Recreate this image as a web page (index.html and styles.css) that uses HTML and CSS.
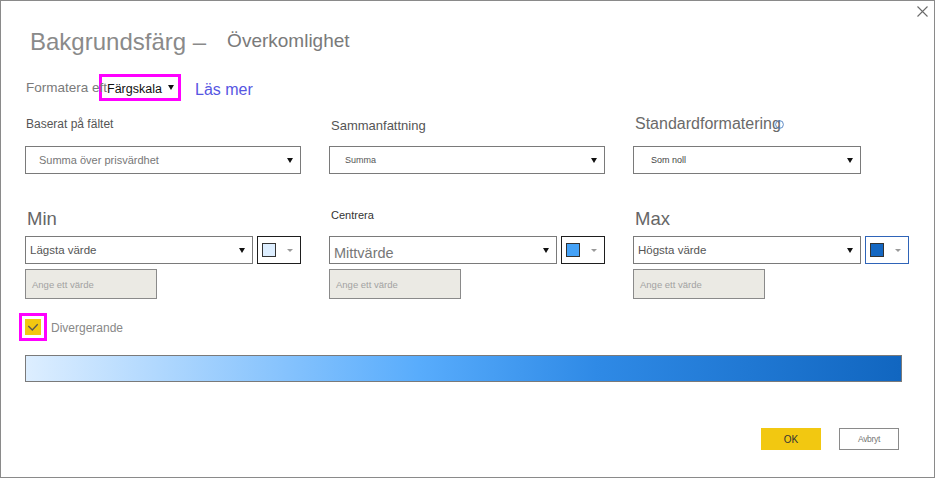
FILE: index.html
```html
<!DOCTYPE html>
<html lang="sv">
<head>
<meta charset="utf-8">
<title>Bakgrundsfärg – Överkomlighet</title>
<link rel="stylesheet" href="styles.css">
</head>
<body>
<div class="dialog">
  <div class="topbar">
    <svg class="close" width="11" height="11" viewBox="0 0 11 11"><path d="M0.5 0.5 L10.5 10.5 M10.5 0.5 L0.5 10.5" stroke="#6a6a6a" stroke-width="1.1" fill="none"/></svg>
  </div>

  <div class="title-row">
    <h1 class="title">Bakgrundsfärg –</h1>
    <span class="subtitle">Överkomlighet</span>
  </div>

  <div class="format-row">
    <span class="format-label">Formatera efter</span>
    <div class="format-select">
      <span class="format-value">Färgskala</span>
      <svg class="format-caret" width="6" height="5" viewBox="0 0 6 5"><polygon points="0,0 6,0 3,5" fill="#111"/></svg>
    </div>
    <a class="learn">Läs mer</a>
  </div>

  <div class="fields">
    <div class="field">
      <div class="field-head"><span class="lbl lbl-base">Baserat på fältet</span></div>
      <div class="select">
        <span class="sel-text sel-field">Summa över prisvärdhet</span>
        <svg class="caret" width="6" height="5" viewBox="0 0 6 5"><polygon points="0,0 6,0 3,5" fill="#111"/></svg>
      </div>
    </div>
    <div class="field">
      <div class="field-head"><span class="lbl lbl-sum">Sammanfattning</span></div>
      <div class="select">
        <span class="sel-text sel-small">Summa</span>
        <svg class="caret" width="6" height="5" viewBox="0 0 6 5"><polygon points="0,0 6,0 3,5" fill="#111"/></svg>
      </div>
    </div>
    <div class="field">
      <div class="field-head"><span class="lbl lbl-std">Standardformatering</span><svg class="info" width="9" height="9" viewBox="0 0 9 9"><circle cx="4.5" cy="4.5" r="3.9" stroke="#4f7fc0" stroke-width="0.9" fill="none"/></svg></div>
      <div class="select select-narrow">
        <span class="sel-text sel-small sel-dark">Som noll</span>
        <svg class="caret" width="6" height="5" viewBox="0 0 6 5"><polygon points="0,0 6,0 3,5" fill="#111"/></svg>
      </div>
    </div>
  </div>

  <div class="stops">
    <div class="stop">
      <div class="stop-head stop-head-big"><span class="stop-lbl">Min</span></div>
      <div class="stop-controls">
        <div class="select select-stop">
          <span class="sel-text sel-stop">Lägsta värde</span>
          <svg class="caret" width="6" height="5" viewBox="0 0 6 5"><polygon points="0,0 6,0 3,5" fill="#111"/></svg>
        </div>
        <div class="picker">
          <span class="swatch swatch-min"></span>
          <svg class="picker-caret" width="6" height="3" viewBox="0 0 6 3"><polygon points="0,0 6,0 3,3" fill="#9a9a9a"/></svg>
        </div>
      </div>
      <div class="value-input">Ange ett värde</div>
    </div>
    <div class="stop">
      <div class="stop-head stop-head-small"><span class="stop-lbl-small">Centrera</span></div>
      <div class="stop-controls">
        <div class="select select-stop">
          <span class="sel-text sel-mid">Mittvärde</span>
          <svg class="caret" width="6" height="5" viewBox="0 0 6 5"><polygon points="0,0 6,0 3,5" fill="#111"/></svg>
        </div>
        <div class="picker">
          <span class="swatch swatch-mid"></span>
          <svg class="picker-caret" width="6" height="3" viewBox="0 0 6 3"><polygon points="0,0 6,0 3,3" fill="#9a9a9a"/></svg>
        </div>
      </div>
      <div class="value-input">Ange ett värde</div>
    </div>
    <div class="stop">
      <div class="stop-head stop-head-big"><span class="stop-lbl">Max</span></div>
      <div class="stop-controls">
        <div class="select select-stop">
          <span class="sel-text sel-stop">Högsta värde</span>
          <svg class="caret" width="6" height="5" viewBox="0 0 6 5"><polygon points="0,0 6,0 3,5" fill="#111"/></svg>
        </div>
        <div class="picker picker-focus">
          <span class="swatch swatch-max"></span>
          <svg class="picker-caret" width="6" height="3" viewBox="0 0 6 3"><polygon points="0,0 6,0 3,3" fill="#9a9a9a"/></svg>
        </div>
      </div>
      <div class="value-input">Ange ett värde</div>
    </div>
  </div>

  <div class="diverge-row">
    <span class="highlight-box">
      <span class="checkbox">
        <svg width="16" height="16" viewBox="0 0 16 16"><path d="M3.3 7 L7.3 11 L12.7 5.3" stroke="#555" stroke-width="1.3" fill="none"/></svg>
      </span>
    </span>
    <span class="diverge-label">Divergerande</span>
  </div>

  <div class="gradient"></div>

  <div class="actions">
    <button class="btn btn-ok">OK</button>
    <button class="btn btn-cancel">Avbryt</button>
  </div>
</div>
</body>
</html>
```

FILE: styles.css
```css
* { box-sizing: border-box; }

html, body {
  margin: 0;
  padding: 0;
  background: #ffffff;
}

body {
  font-family: "Liberation Sans", Arial, sans-serif;
}

.dialog {
  width: 935px;
  height: 478px;
  border: 1px solid #8a8a8a;
  background: #fff;
  padding: 0 0 0 24px;
  overflow: hidden;
}

/* top bar with close */
.topbar {
  height: 17px;
  display: flex;
  justify-content: flex-end;
  align-items: flex-start;
  padding: 5px 6px 0 0;
}
.close { display: block; }

/* title */
.title-row {
  margin-top: 10px;
  height: 28px;
  display: flex;
  align-items: flex-start;
}
.title {
  margin: 0 0 0 5px;
  font-size: 24px;
  line-height: 28px;
  font-weight: normal;
  color: #8a8a8a;
  white-space: nowrap;
}
.subtitle {
  margin-left: 21px;
  font-size: 19px;
  line-height: 26px;
  color: #7a7a7a;
  white-space: nowrap;
}

/* format row */
.format-row {
  margin-top: 18px;
  height: 27px;
  display: flex;
  align-items: flex-start;
}
.format-label {
  position: relative;
  z-index: 1;
  margin: 6px -8px 0 1px;
  width: 81px;
  overflow: hidden;
  font-size: 13.5px;
  line-height: 15px;
  color: #7a7a7a;
  white-space: nowrap;
}
.format-select {
  width: 82px;
  height: 27px;
  border: 3px solid #ff00ff;
  background: #fff;
  display: flex;
  align-items: flex-start;
  padding: 5px 0 0 5px;
}
.format-value {
  font-size: 12.5px;
  line-height: 15px;
  color: #111;
  white-space: nowrap;
}
.format-caret {
  margin: 3px 0 0 6px;
  flex: none;
}
.learn {
  margin: 7px 0 0 14px;
  font-size: 16px;
  line-height: 18px;
  color: #5656e2;
  cursor: pointer;
  white-space: nowrap;
}

/* first fields row */
.fields {
  display: grid;
  grid-template-columns: 276px 276px 276px;
  column-gap: 28px;
}
.field-head {
  height: 45px;
  display: flex;
  align-items: flex-start;
}
.lbl {
  white-space: nowrap;
}
.lbl-base {
  margin: 16px 0 0 1px;
  font-size: 12px;
  line-height: 14px;
  color: #555;
}
.lbl-sum {
  margin: 17px 0 0 2px;
  font-size: 13px;
  line-height: 15px;
  color: #555;
}
.lbl-std {
  margin: 14px 0 0 2px;
  font-size: 16px;
  line-height: 18px;
  color: #6a6a6a;
}
.info {
  margin: 19px 0 0 -6px;
  flex: none;
}

.select {
  height: 28px;
  border: 1px solid #7a7a7a;
  background: #fff;
  display: flex;
  align-items: center;
  justify-content: space-between;
  padding: 0 7px 0 13px;
}
.select-narrow {
  width: 228px;
  padding-left: 15px;
}
.sel-text {
  white-space: nowrap;
}
.sel-field {
  font-size: 11px;
  color: #777;
}
.sel-small {
  font-size: 9px;
  color: #555;
}
.select .sel-small { margin-left: 2px; }
.sel-dark { color: #444; }
.caret { flex: none; }

/* stops row */
.stops {
  display: grid;
  grid-template-columns: 276px 276px 276px;
  column-gap: 28px;
}
.stop-head {
  height: 62px;
  padding-left: 2px;
}
.stop-head-big { padding-top: 34px; }
.stop-head-small { padding-top: 35px; }
.stop-lbl {
  display: block;
  font-size: 18.5px;
  line-height: 22px;
  color: #666;
}
.stop-lbl-small {
  display: block;
  font-size: 11px;
  line-height: 13px;
  color: #333;
}
.stop-controls {
  display: flex;
  gap: 4px;
}
.select-stop {
  width: 228px;
  padding-left: 4px;
}
.sel-stop {
  font-size: 11.5px;
  color: #555;
}
.sel-mid {
  font-size: 14.5px;
  color: #777;
  padding-top: 6px;
}
.picker {
  width: 44px;
  height: 28px;
  border: 1px solid #1e1e1e;
  display: flex;
  align-items: center;
  padding-left: 4px;
}
.picker-focus {
  border-color: #2f64b8;
}
.swatch {
  width: 14px;
  height: 14px;
  border: 1px solid #333;
  flex: none;
}
.swatch-min { background: #ddeeff; }
.swatch-mid { background: #44a2f8; }
.swatch-max { background: #1467c2; }
.picker-caret {
  margin-left: 11px;
  flex: none;
}
.value-input {
  margin-top: 5px;
  width: 132px;
  height: 30px;
  border: 1px solid #8a8a8a;
  background: #ebeae4;
  display: flex;
  align-items: center;
  padding-left: 6px;
  font-size: 9.5px;
  color: #a2a2a2;
  white-space: nowrap;
}

/* divergent */
.diverge-row {
  margin: 14px 0 0 -6px;
  display: flex;
  align-items: flex-start;
}
.highlight-box {
  width: 28px;
  height: 28px;
  border: 3px solid #ff00ff;
  display: flex;
  align-items: center;
  justify-content: center;
}
.checkbox {
  width: 16px;
  height: 16px;
  background: #f2c811;
  display: block;
}
.checkbox svg { display: block; }
.diverge-label {
  margin: 8px 0 0 4px;
  font-size: 12px;
  line-height: 14px;
  color: #888;
}

/* gradient bar */
.gradient {
  margin-top: 14px;
  width: 877px;
  height: 27px;
  border: 1px solid #7a7a7a;
  background: linear-gradient(to right, #ddeeff 0%, #58acfc 45%, #2f8ae6 65%, #1166c0 100%);
}

/* actions */
.actions {
  margin-top: 46px;
  display: flex;
  justify-content: flex-end;
  gap: 18px;
  padding-right: 35px;
}
.btn {
  width: 60px;
  height: 22px;
  padding: 0;
  font-family: "Liberation Sans", Arial, sans-serif;
  cursor: pointer;
}
.btn-ok {
  border: none;
  background: #f2c811;
  color: #333;
  font-size: 10px;
}
.btn-cancel {
  border: 1px solid #8a8a8a;
  background: #fff;
  color: #777;
  font-size: 8.5px;
  letter-spacing: -0.3px;
}
```
